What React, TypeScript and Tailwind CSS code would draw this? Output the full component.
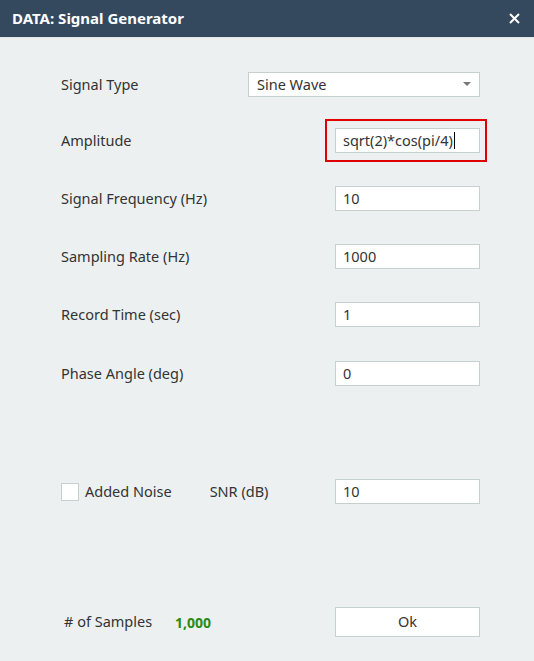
import React from 'react';

const font = { fontFamily: '"Noto Sans", "DejaVu Sans", sans-serif' };

const Field = ({ value }: { value: string }) => (
  <div className="w-[145px] h-[25px] bg-white border border-[#c5d0cf] flex items-center px-[7px] text-[14.5px] text-[#333]">{value}</div>
);

const Row = ({ label, children, className }: { label: string; children: React.ReactNode; className: string }) => (
  <div className={`flex items-center justify-between h-[25px] ${className}`}>
    <span className="text-[14.5px] text-[#333]">{label}</span>
    {children}
  </div>
);

export default function App() {
  return (
    <div className="w-[534px] h-[661px] bg-[#ecf0f1] flex flex-col" style={font}>
      <div className="h-[37px] bg-[#34495e] flex items-center justify-between pl-[12px] pr-[14px]">
        <span className="text-white font-bold text-[15px]">DATA: Signal Generator</span>
        <svg width="11" height="11" viewBox="0 0 11 11"><path d="M1 1 L10 10 M10 1 L1 10" stroke="white" strokeWidth="2" /></svg>
      </div>
      <div className="h-px bg-[#dfe5e6]" />
      <div className="flex flex-col pl-[61px] pr-[54px]">
        <Row label="Signal Type" className="mt-[34px]">
          <div className="w-[232px] h-[25px] bg-white border border-[#c5d0cf] flex items-center justify-between pl-[8px] pr-[8px] text-[14.5px] text-[#333]">
            <span>Sine Wave</span>
            <svg width="8" height="5" viewBox="0 0 8 5"><path d="M0 0 H8 L4 4 Z" fill="#777" /></svg>
          </div>
        </Row>
        <Row label="Amplitude" className="mt-[31px]">
          <div className="relative">
            <div className="absolute -left-[10px] -top-[9px] -right-[7px] -bottom-[9px] border-2 border-[#e00000]" />
            <div className="w-[145px] h-[25px] bg-white border border-[#c5d0cf] flex items-center px-[7px] text-[14.5px] text-[#333]">
              <span>sqrt(2)*cos(pi/4)</span>
              <span className="w-px h-[17px] bg-black ml-px" />
            </div>
          </div>
        </Row>
        <Row label="Signal Frequency (Hz)" className="mt-[33px]"><Field value="10" /></Row>
        <Row label="Sampling Rate (Hz)" className="mt-[33px]"><Field value="1000" /></Row>
        <Row label="Record Time (sec)" className="mt-[33px]"><Field value="1" /></Row>
        <Row label="Phase Angle (deg)" className="mt-[34px]"><Field value="0" /></Row>
        <div className="flex items-center justify-between h-[25px] mt-[93px]">
          <div className="flex items-center">
            <span className="w-[18px] h-[18px] bg-white border border-[#c5d0cf]" />
            <span className="ml-[6px] text-[14.5px] text-[#333]">Added Noise</span>
            <span className="ml-[38px] text-[14.5px] text-[#333]">SNR (dB)</span>
          </div>
          <Field value="10" />
        </div>
        <div className="flex items-center justify-between h-[30px] mt-[103px]">
          <div className="flex items-center">
            <span className="text-[14.5px] text-[#333] ml-[3px]"># of Samples</span>
            <span className="ml-[23px] text-[14px] font-bold text-[#2a8a14]">1,000</span>
          </div>
          <button className="w-[145px] h-[30px] bg-white border border-[#c5d0cf] text-[14.5px] text-[#333]">Ok</button>
        </div>
      </div>
    </div>
  );
}
